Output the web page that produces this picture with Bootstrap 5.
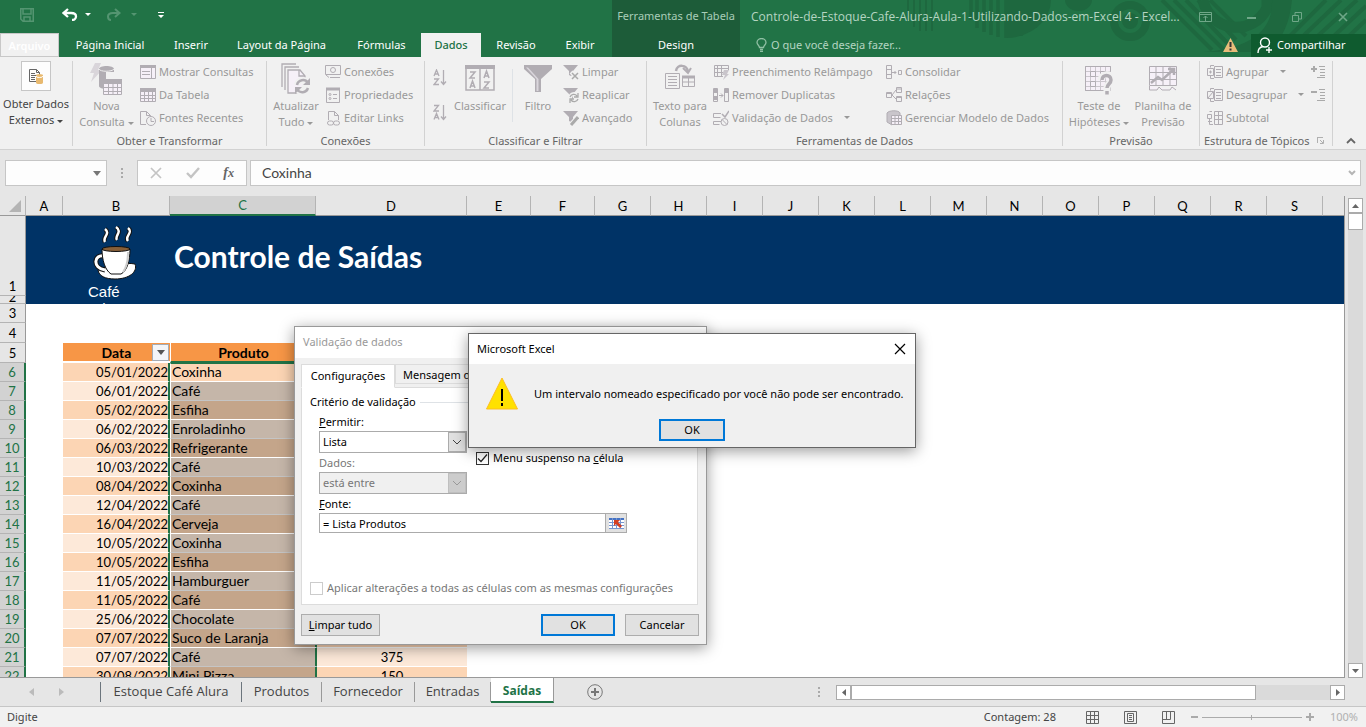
<!DOCTYPE html>
<html lang="pt-BR">
<head>
<meta charset="utf-8">
<meta name="viewport" content="width=device-width, initial-scale=1">
<title>Controle-de-Estoque-Cafe-Alura-Aula-1 - Excel</title>
<link href="https://cdn.jsdelivr.net/npm/bootstrap@5.3.0/dist/css/bootstrap.min.css" rel="stylesheet">
<style>
:root{--xl:#217346;--xl-dark:#1d5c39;--ui:#f1f1f1;--chrome:#e6e6e6;--dis:#999;--ico:#b1adb3}
body{font-family:"Noto Sans","Open Sans",sans-serif;font-size:11px;line-height:16px;color:#444;background:var(--chrome)}
button,input,select{font:inherit;color:inherit}
button{border:0;background:none;padding:0}
svg{display:block;flex:none}
.app{min-height:100vh;height:100vh}
/* title bar and tabs */
.top{background:var(--xl);height:57px}
.top .deco{left:900px;top:0}
.mainpart{width:612px}
.ctx{width:128px;background:var(--xl-dark);color:#a9cdb8}
.bar1{height:33px}
.tabs{display:grid;grid-template-columns:59px 102px 60px 121px 79px 60px 70px 58px;height:24px}
.tabs a,.ctx a{color:#fff;text-decoration:none;text-align:center;line-height:24px;height:24px;white-space:nowrap}
.tabs a.filetab{background:var(--ui);border:1px solid #c8c8c8;line-height:24px;font-weight:600}
.tabs a.on{background:var(--ui);color:var(--xl);font-weight:500}
.doc{color:#b5d5c2}
.doctitle{font-family:"Open Sans",sans-serif;font-size:12px;padding-left:11px}
.winbtns button{width:46px;height:24px;display:flex;align-items:center;justify-content:center}
.share{background:#0f5b2f;color:#fff;width:115px;height:23px}
/* ribbon */
.ribbon{background:var(--ui);height:93px;border-bottom:1px solid #d2d2d2;padding-top:3px}
.rgroup{position:relative;border-right:1px solid #d2d2d2;height:85px;margin-top:1px}
.rgroup .acts{height:69px;display:flex}
.rgroup .gname{color:#666;text-align:center;line-height:16px;height:16px;padding-top:3px}
.big{display:flex;flex-direction:column;align-items:center;color:var(--dis);white-space:nowrap;padding-top:2px}
.big svg.pic{margin-bottom:3px;height:32px}
.big.live{color:#444;padding-top:0}
.rows{display:flex;flex-direction:column;margin-top:-1px}
.rows button{height:23px;display:flex;align-items:center;gap:3px;color:var(--dis);white-space:nowrap}
.car{display:inline-block;border:3px solid transparent;border-top-color:currentColor;border-bottom:0;vertical-align:middle;margin-left:3px}
.picbox{width:30px;height:30px;background:#fdfdfd;border:1px solid #c6c6c6;display:flex;align-items:center;justify-content:center;margin-bottom:5px}
/* formula bar */
.fbar{height:46px;padding:10px 5px 10px 5px}
.fbox{background:#fdfdfd;border:1px solid #c6c6c6;height:26px}
.namebox{width:102px}
.fxin{border:0;background:transparent;outline:0;font-family:Lato,sans-serif;font-size:14px;padding:0 0 0 11px}
/* sheet */
.sheet{font-family:Lato,"Noto Sans",sans-serif;font-size:14px;line-height:17px;color:#000;background:#fff;border-right:1px solid #999;border-bottom:1px solid #999;overflow:hidden}
.sheet table{table-layout:fixed;border-collapse:separate;border-spacing:0;width:100%}
.sheet th,.sheet td{padding:0;overflow:hidden;white-space:nowrap;font-weight:400}
.sheet th{font-size:13px}
.sheet thead th{height:20px;background:var(--chrome);border-right:1px solid #b4b4b4;border-bottom:1px solid #999;text-align:center;padding-top:1px}
.sheet thead th.sel{background:#d2d2d2;color:var(--xl);border-bottom:2px solid var(--xl)}
.sheet tbody th{background:var(--chrome);border-right:1px solid #999;border-bottom:1px solid #b4b4b4;text-align:center;vertical-align:bottom;height:19px}
.sheet tbody th.tall{height:80px}
.sheet tbody th.tiny{height:8px;line-height:7px}
.sheet tbody th.mid{height:20px}
.tiny div{height:7px;overflow:hidden;display:flex;align-items:end;line-height:12px;justify-content:center}
.picked th{background:#d2d2d2!important;color:var(--xl);border-right:2px solid var(--xl)!important}
.banner{background:#036;color:#fff;height:88px;overflow:hidden}
.banner h1{font-size:30px;line-height:34px;font-weight:700;margin:0;padding:23px 0 0 12px}
.logo{width:74px;margin-left:62px;padding-top:10px;font:15px/17px "Liberation Sans",sans-serif}
.band td{vertical-align:top}
.band td.c1,.band td.c2,.band td.c3{border-bottom:1px solid #fff}
.band .c1{background:#fcd5b4;text-align:right}
.band .c2{background:#c4a58a;border-left:1px solid #fff;padding-left:1px!important;box-shadow:inset -1px 0 var(--xl)}
.band .c1{border-right:2px solid var(--xl);font-size:13px;line-height:18px}
.band .c3{background:#fcd5b4;text-align:center;border-left:1px solid var(--xl);font-size:13px;line-height:18px}
.band:nth-child(odd) .c1,.band:nth-child(odd) .c3{background:#fde9d9}
.band:nth-child(odd) .c2{background:#c5b6a9;border-bottom-color:#c5c5c5}
.band .c2.first{background:#fcd5b4;border-top:1px solid var(--xl);line-height:16px}
.cols td.hd{background:#f79646;font-weight:700;text-align:center;border-bottom:2px solid #fff;vertical-align:bottom}
.cols td.sela{border-left:1px solid #fff;border-bottom-color:var(--xl)}
.filt{right:1px;bottom:0;width:17px;height:17px;background:#f3f5f8;border:1px solid #a5acb5;display:flex;align-items:center;justify-content:center}
.vbar{width:15px;margin:2px 3px 0 3px;background:#dadada}
.vbar button{width:15px;height:15px;background:#fff;border:1px solid #ababab;display:flex;align-items:center;justify-content:center}
.vbar .thumb{height:17px}
/* bottom bars */
.sheets{height:28px;color:#444;font-family:"Open Sans",sans-serif;font-size:13px}
.sheets a{color:#444;text-decoration:none;height:20px;line-height:18px;text-align:center;border-right:1px solid #999;margin-top:4px;white-space:nowrap}
.sheets a.on{height:25px;margin-top:0;background:#fff;color:var(--xl);font-size:12px;font-weight:700;line-height:26px;border-bottom:2px solid var(--xl)}
.hbar{background:#dadada;height:15px;width:509px}
.hbar button{background:#fff;border:1px solid #ababab;width:15px;height:15px;display:flex;align-items:center;justify-content:center}
.hbar .thumb{width:405px}
.status{height:21px;background:var(--ui);border-top:1px solid #c6c6c6}
.zoomer{-webkit-appearance:none;appearance:none;width:100px;height:9px;margin:0;background:linear-gradient(#ababab,#ababab) center/100% 1px no-repeat}
.zoomer::-webkit-slider-thumb{-webkit-appearance:none;width:1px;height:5px;background:#ababab}
/* dialogs */
.dlg{position:absolute;color:#000;background:#f0f0f0;box-shadow:0 3px 14px rgba(0,0,0,.4)}
.dlg label{display:block}
.valid{left:294px;top:326px;width:413px;border:1px solid #999;z-index:2}
.valid .cap{background:#fff;height:31px;line-height:30px;padding-left:8px;color:#999}
.valid .page{background:#fff;border:1px solid #dcdcdc;margin:-1px 8px 0 6px;height:218px;padding:6px 8px 0 8px}
.valid .dt{border:1px solid #dcdcdc;background:#f0f0f0;height:20px;line-height:20px;padding:0 7px}
.valid .dt.on{background:#fff;border-bottom-color:#fff;height:24px;line-height:22px;width:94px;padding:0;position:relative}
.field{border:1px solid #ababab;border-radius:0;background:#fff;padding:0 3px;outline:0}
.pick{appearance:none;-webkit-appearance:none;width:148px;height:22px;background:#fff url("data:image/svg+xml,%3Csvg xmlns='http://www.w3.org/2000/svg' width='18' height='20'%3E%3Crect x='.5' y='.5' width='17' height='19' fill='%23e1e1e1' stroke='%23ababab'/%3E%3Cpath d='M5 8l4 4 4-4' fill='none' stroke='%23444'/%3E%3C/svg%3E") right center no-repeat}
.pick:disabled{background-color:#f0f0f0;color:#777;opacity:1;background-image:url("data:image/svg+xml,%3Csvg xmlns='http://www.w3.org/2000/svg' width='18' height='20'%3E%3Crect x='.5' y='.5' width='17' height='19' fill='%23ccc' stroke='%23bfbfbf'/%3E%3Cpath d='M5 8l4 4 4-4' fill='none' stroke='%23999'/%3E%3C/svg%3E")}
.tick{appearance:none;-webkit-appearance:none;width:13px;height:13px;border:1px solid #333;background:#fff;margin:0;flex:none}
.tick:checked{background:url("data:image/svg+xml,%3Csvg xmlns='http://www.w3.org/2000/svg' width='11' height='11'%3E%3Cpath d='M1 5.5l3 3 6-7' fill='none' stroke='%23222' stroke-width='1.2'/%3E%3C/svg%3E")}
.tick:disabled{border-color:#ccc}
.pb{background:#e1e1e1;border:1px solid #adadad;height:22px;width:74px;line-height:20px}
.pb.main{border:2px solid #0078d7;line-height:18px}
.alertbox{left:468px;top:333px;width:448px;border:1px solid #666;z-index:3}
.alertbox .cap{background:#fff;height:30px}
</style>
</head>
<body>
<svg width="0" height="0" class="position-absolute" aria-hidden="true">
<defs>
<symbol id="win" viewBox="0 0 16 16"><path d="M.5 1.5h15v13H.5zM11.5 4v10M2 7.5h8M2 10.500h8" fill="#f6f0f8" stroke="#b1adb3"/><path d="M0 1h16v3H0z" fill="#b1adb3"/></symbol>
<symbol id="tab" viewBox="0 0 16 16"><path d="M.5 1.500h15v13H.5z" fill="#f6f0f8" stroke="#b1adb3"/><path d="M0 1h16v4H0z" fill="#b1adb3"/><path d="M4.500 2v13M8.500 2v13M12.500 2v13M0 8.500h16M0 11.500h16" stroke="#b1adb3"/></symbol>
<symbol id="page" viewBox="0 0 16 16"><path d="M6 14.500H.5V1.500h6l4 4V7M6.500 1.500v4h4" fill="none" stroke="#b1adb3"/></symbol>
<symbol id="funnel" viewBox="0 0 16 16"><path d="M0 1h15L10 7v6l-4-2V7z" fill="#b1adb3"/></symbol>
<symbol id="box5" viewBox="0 0 16 16"><path d="M.5 1.500h5v13h-5zM.5 5.500h5M.5 10.500h5" fill="none" stroke="#b1adb3"/></symbol>
<symbol id="grp" viewBox="0 0 16 16"><path d="M7.500 2.500h8v11h-8zM9 5.500h5M9 8.500h5M9 11.500h5M7 1.500H3.500v2M3.500 12v2.500H7M.5 4.500h6v7h-6z" fill="none" stroke="#b1adb3"/></symbol>
</defs></svg>
<div class="app d-flex flex-column position-relative overflow-hidden">

<header class="top d-flex position-relative flex-shrink-0">
  <svg class="deco position-absolute" width="466" height="52" viewBox="0 0 466 52" fill="#1e683f" stroke="#1e683f">
    <path d="M7 0h2v20H7zM13 0h2v27h-2zM19 0h2v31h-2zM25 0h2v31h-2zM31 0h2v31h-2z" stroke="none"/>
    <path d="M71 0v20M77 0v28M84 0v32M91 0v35M98 0v37M106 0v38M114 0v37M121 0v36M128 0v32M135 0v28M142 0v20" stroke-width="3.500"/>
    <path d="M106 0h45a45 38 0 0 1-45 38z" stroke="none"/><path d="M165 0a13.500 11 0 0 0 27 0z" stroke="none"/>
    <circle cx="230" cy="21" r="16" fill="none" stroke-width="8"/><circle cx="230" cy="21" r="8" stroke="none"/>
    <path d="M262 0l50 50M274 0l50 50M286 0l46 48M298 0l38 40M310 0l36 36" fill="none" stroke-width="4"/>
    <path d="M303 0a34 34 0 0 0 64 8V0" fill="none" stroke-width="11"/>
    <path d="M392 0q-4 40-28 52h-60q70-6 68-52z" stroke="none"/>
    <path d="M399 40L441 0M409 44L457 0M421 48L466 6M433 51L466 20M388 38L426 0" fill="none" stroke-width="4"/>
  </svg>
  <div class="mainpart flex-shrink-0">
    <div class="bar1 d-flex align-items-center pb-1">
      <button aria-label="Salvar" style="margin-left:20px"><svg width="14" height="14" fill="none" stroke="#549571" stroke-width="1.500"><path d="M.75 .75h12.500v12.500H3L.75 11zM3 1v5h8V1M4 13V9h6v4"/></svg></button>
      <button class="ms-4" aria-label="Desfazer"><svg width="20" height="13" fill="none" stroke="#fff" stroke-width="2.300" class="ms-1"><path d="M6 1L1.500 5 6 9M2 5H9c3.500 0 5 1.500 5 3.500s-2 3.500-4 3.500"/></svg></button>
      <i class="car text-white"></i>
      <button aria-label="Refazer" style="margin-left:15px"><svg width="17" height="13" fill="none" stroke="#549571" stroke-width="2"><path d="M9 1l4.500 4L9 9M13 5H7C3.500 5 2 6.500 2 8.500S3 12 5 12"/></svg></button>
      <i class="car ms-2" style="color:#549571"></i>
      <button aria-label="Personalizar" style="margin-left:21px"><svg width="6" height="8" fill="#fff"><path d="M0 1h6v1H0zM0 4h6L3 7z"/></svg></button>
    </div>
    <nav class="tabs">
      <a href="#" class="filetab">Arquivo</a><a href="#">Página Inicial</a><a href="#">Inserir</a><a href="#">Layout da Página</a><a href="#">Fórmulas</a><a href="#" class="on">Dados</a><a href="#">Revisão</a><a href="#">Exibir</a>
    </nav>
  </div>
  <div class="ctx d-flex flex-column flex-shrink-0 text-center text-nowrap">
    <div class="bar1 pt-2">Ferramentas de Tabela</div>
    <a href="#">Design</a>
  </div>
  <div class="flex-grow-1 position-relative">
    <div class="bar1 d-flex align-items-center doc">
      <span class="doctitle text-nowrap me-auto">Controle-de-Estoque-Cafe-Alura-Aula-1-Utilizando-Dados-em-Excel 4 - Excel...</span>
      <div class="winbtns d-flex align-items-center">
      <button aria-label="Opções da faixa"><svg width="13" height="10" fill="none" stroke="#6fa788"><path d="M.5 .5h12v9H.5zM1 2.500h11M6.500 9V4M4.500 6l2-2 2 2"/></svg></button>
      <button aria-label="Minimizar"><svg width="9" height="10"><path d="M0 6h9" stroke="#6fa788" stroke-width="2"/></svg></button>
      <button aria-label="Restaurar"><svg width="10" height="10" fill="none" stroke="#6fa788"><path d="M.5 3.500h6v6h-6zM3 3V.5h6.500V7H7"/></svg></button>
      <button aria-label="Fechar"><svg width="10" height="10"><path d="M1 1l8 8M9 1L1 9" stroke="#6fa788" stroke-width="1.600"/></svg></button>
      </div>
    </div>
    <div class="d-flex align-items-center doc" style="height:24px">
      <svg width="11" height="14" class="ms-3" fill="none" stroke="#8fbfa3" stroke-width="1.300"><path d="M3.500 9.500c0-2-2.500-2.500-2.500-5a4.500 4 0 0 1 9 0c0 2.500-2.500 3-2.500 5zM4 11.500h3M4 13.300h3"/></svg>
      <button class="doc ms-1">O que você deseja fazer...</button>
      <svg width="15" height="14" class="ms-auto" style="margin-right:13px"><path d="M7.500 0L15 14H0z" fill="#e9bd7b"/><path d="M7.500 4v5M7.500 10.500v2" stroke="#333" stroke-width="2"/></svg>
      <button class="share d-flex align-items-center"><svg width="16" height="17" class="me-1" style="margin-left:6px" fill="none" stroke="#fff" stroke-width="1.400"><circle cx="8" cy="5.500" r="4.500"/><path d="M1 16c0-4 2-6 5-6.500M12 10v6M9 13h6"/></svg>Compartilhar</button>
    </div>
  </div>
</header>

<section class="ribbon d-flex flex-shrink-0">
  <div class="rgroup" style="width:73px">
    <div class="acts justify-content-center"><button class="big live"><span class="picbox"><svg width="16" height="17"><path d="M1.500 1.500h7l3 3v9h-10zM8.500 1.500v3h3M3 5.500h4M3 7.500h6M3 9.500h4M3 11.500h4" fill="none" stroke="#666"/><path d="M8 7.500v7a3.500 1.500 0 0 0 7 0v-7a3.500 1.500 0 0 0-7 0" fill="#e8b96f"/><path d="M8 8a3.500 1.500 0 0 0 7 0" stroke="#fff" fill="none"/></svg></span><span>Obter Dados</span><span>Externos<i class="car"></i></span></button></div>
  </div>
  <div class="rgroup" style="width:194px">
    <div class="acts"><button class="big justify-content-start" style="width:67px">
      <svg class="pic" width="33" height="32"><path d="M5 0h6L8 7h4L1 19l3-9H0z" fill="#d9d5da"/><path d="M9 6v17c0 2 4 3 7 3V9h8V6c0-4-15-4-15 0" fill="#b1adb3"/><path d="M9 6c1 3 13 3 15 0" stroke="#eee" fill="none"/><path d="M13.500 17.500h18v14h-18z" fill="#f6f0f8" stroke="#b1adb3"/><path d="M13 16h19v5H13z" fill="#b1adb3"/><path d="M18.500 20v12M23 20v12M27.500 20v12M13 24.500h19M13 28.500h19" stroke="#b1adb3"/></svg><span>Nova</span><span>Consulta<i class="car"></i></span></button>
      <div class="rows"><button><svg width="16" height="16"><use href="#win"/></svg>Mostrar Consultas</button><button><svg width="16" height="16"><use href="#tab"/></svg>Da Tabela</button><button><svg width="16" height="16" fill="none" stroke="#b1adb3"><use href="#page"/><circle cx="11" cy="11" r="4.500" fill="#f1f1f1"/><path d="M11 8v3.500h3"/></svg>Fontes Recentes</button></div></div>
    <div class="gname">Obter e Transformar</div>
  </div>
  <div class="rgroup" style="width:158px">
    <div class="acts"><button class="big" style="width:58px"><svg class="pic" width="32" height="32" fill="none" stroke="#b1adb3" stroke-width="1.300"><path d="M2 24V1h14M5 27V4h14"/><path d="M18 30H8V7h12l5 6v3" fill="#f6f0f8"/><path d="M19 7v6h6"/><path d="M17 22a6 6 0 0 1 11-2M28 25a6 6 0 0 1-11 1" stroke="#f1f1f1" stroke-width="6"/><path d="M17 22a6 6 0 0 1 11-2M28 25a6 6 0 0 1-11 1" stroke-width="2.500"/><path d="M30 15v7h-7zM15 31v-7h7z" fill="#b1adb3" stroke="none"/></svg><span>Atualizar</span><span>Tudo<i class="car"></i></span></button>
      <div class="rows"><button><svg width="16" height="16" fill="none" stroke="#b1adb3"><path d="M.5 1.500h15v9h-15zM5 13.500h10M1 11l3 2.500"/><circle cx="8" cy="6" r="2.500"/></svg>Conexões</button><button><svg width="16" height="16" fill="none" stroke="#b1adb3"><path d="M1.500 1.500h13v14h-13zM8 7.500h4M8 11.500h4"/><path d="M1 2h14" stroke-width="3"/><circle cx="5" cy="7.500" r="1"/><circle cx="5" cy="11.500" r="1"/></svg>Propriedades</button><button><svg width="16" height="16" fill="none" stroke="#b1adb3"><path d="M3.500 10V1.500h6l4 4V10M9.500 1.500v4h4"/><rect x="2.500" y="11" width="6" height="4" rx="2"/><rect x="8.500" y="11" width="6" height="4" rx="2"/></svg>Editar Links</button></div></div>
    <div class="gname">Conexões</div>
  </div>
  <div class="rgroup" style="width:222px">
    <div class="acts"><div class="rows justify-content-around" style="width:27px;padding-left:8px">
      <button aria-label="Classificar de A a Z"><svg width="14" height="17" fill="none" stroke="#b1adb3" stroke-width="1.300"><path d="M1 7l2.500-6L6 7M2 5h3M1 10h4.500L1 15.500h5M10.500 1v14M8 12.500l2.500 3 2.500-3"/></svg></button>
      <button aria-label="Classificar de Z a A"><svg width="14" height="17" fill="none" stroke="#b1adb3" stroke-width="1.300"><path d="M1 15.500l2.500-6L6 15.500M2 13.500h3M1 1.500h4.500L1 7h5M10.500 1v14M8 12.500l2.500 3 2.500-3"/></svg></button></div>
      <button class="big" style="width:56px"><svg class="pic" width="30" height="32" fill="none" stroke="#b1adb3" stroke-width="1.500"><path d="M1 4h28v23H1zM15 4v23"/><path d="M0 4h30" stroke-width="4"/><path d="M5 9h5l-5 6h5M19 15l2.500-7 2.500 7M19.500 13h4M5 25l2.500-7 2.500 7M5.500 23h4M19 19h5l-5 6h5"/></svg><span>Classificar</span></button>
      <span class="border-start my-2 ms-1"></span>
      <button class="big" style="width:50px"><svg class="pic" width="28" height="32"><path d="M0 2h28v4L17 16v13h-6V16L0 6z" fill="#b1adb3"/><path d="M12.500 16h2v12h-2zM2 4.500L12.500 16h2L4 4.500z" fill="#dad6dc"/></svg><span>Filtro</span></button>
      <div class="rows"><button><svg width="16" height="16"><use href="#funnel"/><path d="M8 8l7 7M15 8l-7 7" stroke="#f1f1f1" stroke-width="4"/><path d="M9 9l6 6M15 9l-6 6" stroke="#aaa" stroke-width="1.500"/></svg>Limpar</button><button><svg width="16" height="16" fill="none"><use href="#funnel"/><circle cx="11" cy="11" r="4" stroke="#f1f1f1" stroke-width="4"/><path d="M7 10a4 4 0 0 1 7-1M15 12a4 4 0 0 1-7 1M15 6v4h-4M7 16v-4h4" stroke="#aaa" stroke-width="1.300"/></svg>Reaplicar</button><button><svg width="16" height="16"><use href="#funnel"/><path d="M8 15l7-8" stroke="#f1f1f1" stroke-width="5"/><path d="M8 15l7-8" stroke="#aaa" stroke-width="3"/></svg>Avançado</button></div></div>
    <div class="gname">Classificar e Filtrar</div>
  </div>
  <div class="rgroup" style="width:416px">
    <div class="acts"><button class="big" style="width:66px"><svg class="pic" width="32" height="32" fill="none" stroke="#b1adb3"><path d="M1.500 10.500h14v15h-14zM4 13.500h9M4 16.500h9M4 19.500h9M4 22.500h9M18.500 14.500h12v9h-12zM19 19h12M24.500 15v9"/><path d="M18 14h13" stroke-width="3"/><path d="M12 8c1-7 11-7 12 1" stroke-width="2.500"/><path d="M19 5l5 5 3-5" stroke-width="2"/></svg><span>Texto para</span><span>Colunas</span></button>
      <div class="rows" style="width:173px"><button><svg width="16" height="16" fill="none" stroke="#b1adb3"><path d="M10 12.500H1.500v-11h14V6M1 4.500h14M1 8.500h9M4.500 2v10M8.500 2v10"/><path d="M11 6h5l-2 4h2l-6 6 2-5H9z" fill="#c9c5cb" stroke="none"/></svg>Preenchimento Relâmpago</button><button><svg width="16" height="16" fill="none" stroke="#b1adb3"><path d="M.5 1.500h4v13h-4zM11.500 1.500h4v13h-4zM6 8.500h4M8 6.500l2 2-2 2"/><path d="M0 4h5M0 11h5M11 4h5" stroke-width="4"/></svg>Remover Duplicatas</button><button><svg width="16" height="16" fill="none" stroke="#b1adb3"><path d="M8 3.500H.5v4h7M8 11.500H.5v3h6"/><path d="M9 4l3 3 4-6" stroke-width="1.500"/><circle cx="11.500" cy="12" r="3.500"/><path d="M9 9.500l5 5"/></svg>Validação de Dados<i class="car ms-2"></i></button></div>
      <div class="rows"><button><svg width="16" height="16" fill="none" stroke="#b1adb3"><use href="#box5"/><path d="M6 8.500h4M8.500 7l1.500 1.500L8.500 10M12.500 6.500h3v4h-3z"/></svg>Consolidar</button><button><svg width="16" height="16" fill="none" stroke="#b1adb3"><path d="M.5 5.500h5v5h-5zM10.500 .5h5v5h-5zM10.500 9.500h5v5h-5zM6 8l4-5M6 8l4 4M0 6.500h6M10 2h6M10 10.500h6"/></svg>Relações</button><button><svg width="16" height="16" fill="none" stroke="#b1adb3"><path d="M1 3c2-3 12-3 13 0v3H6v9L1 12z" fill="#c9c5cb"/><path d="M5.500 5.500h10v9h-10zM9 5v10M12.500 5v10M5 8.500h11M5 11.500h11" fill="#f6f0f8"/></svg>Gerenciar Modelo de Dados</button></div></div>
    <div class="gname">Ferramentas de Dados</div>
  </div>
  <div class="rgroup" style="width:137px">
    <div class="acts" style="padding-left:3px"><button class="big" style="width:66px"><svg class="pic" width="30" height="32" fill="none" stroke="#b1adb3"><path d="M1.500 3.500h25v24h-25z" fill="#f6f0f8"/><path d="M6.500 3v24M11.500 3v24M16.500 3v24M21.500 3v24M1 8.500h26M1 13.500h26M1 18.500h26M1 23.500h26" stroke="#cbc7cd"/><path d="M1.500 3.500h25v24h-25zM6.500 8.500h5v5h-5zM16.500 8.500h5v5h-5zM6.500 18.500h5v5h-5z"/><path d="M17 17c0-7 11-7 11-1 0 5-5 4-5 9v7" stroke="#f1f1f1" stroke-width="7"/><path d="M18 17c0-6 9-6 9 0 0 4-4 4-4 8M23 28v3.500" stroke-width="3.500"/></svg><span>Teste de</span><span>Hipóteses<i class="car"></i></span></button><button class="big" style="width:62px"><svg class="pic" width="30" height="32" fill="none" stroke="#b1adb3"><path d="M1.500 3.500h27v19h-27zM8 3v20M15 3v20M22 3v20M1 9.500h27M1 16.500h27M1.500 23v4H9l2-3 3 3h8l2-3 4 3" fill="#f6f0f8"/><path d="M3 20l7-6 4 3 12-11M20 6h6v6" stroke-width="2.500"/></svg><span>Planilha de</span><span>Previsão</span></button></div>
    <div class="gname">Previsão</div>
  </div>
  <div class="rgroup" style="width:133px">
    <div class="acts"><div class="rows" style="width:103px;padding-left:7px"><button><svg width="16" height="16" stroke="#b1adb3"><use href="#grp"/><path d="M2 8h3M3.500 6.500v3"/></svg>Agrupar<i class="car ms-2"></i></button><button><svg width="16" height="16" stroke="#b1adb3"><use href="#grp"/><path d="M1 11l5-6"/></svg>Desagrupar<i class="car ms-2"></i></button><button><svg width="16" height="16" fill="none" stroke="#b1adb3"><path d="M7.500 1.500h8v13h-8zM11.500 1v14M7 5.500h9M7 9.500h9M5 1.500H2.500M.5 4.500h4v4h-4zM2.500 9v5.500H6M1 11.500h4"/></svg>Subtotal</button></div>
      <div class="rows ms-1 ps-1"><button aria-label="Mostrar Detalhe"><svg width="14" height="14" stroke="#aaa"><path d="M0 4h6M3 1v6" stroke-width="2"/><path d="M8 1.500h6M9 4.500h5M9 7.500h5M9 10.500h5M6 12.500h8"/></svg></button><button aria-label="Ocultar Detalhe"><svg width="14" height="14" stroke="#aaa"><path d="M0 4h6" stroke-width="2"/><path d="M8 1.500h6M9 4.500h5M9 7.500h5M9 10.500h5M6 12.500h8"/></svg></button></div></div>
    <div class="gname d-flex justify-content-between ps-1 pe-1 text-nowrap"><span>Estrutura de Tópicos</span><svg width="7" height="7" class="me-1 mt-1" fill="none" stroke="#b0b0b0"><path d="M0 .5h6M.5 0v6M3 3l3 3M6.500 3v3.500H3"/></svg></div>
  </div>
  <button class="ms-auto align-self-end mb-1" aria-label="Recolher" style="width:14px;margin-right:6px"><svg width="10" height="8" fill="none" stroke="#666" stroke-width="1.800"><path d="M1 6l4-4 4 4"/></svg></button>
</section>

<section class="fbar d-flex flex-shrink-0">
  <button class="fbox namebox d-flex align-items-center justify-content-end" aria-label="Caixa de nome" style="padding-right:5px"><svg width="8" height="5"><path d="M0 0h8L4 5z" fill="#777"/></svg></button>
  <span class="d-flex align-items-center justify-content-center" style="width:30px"><svg width="2" height="11" fill="#aaa"><path d="M0 0h2v2H0zM0 4h2v2H0zM0 8h2v2H0z"/></svg></span>
  <div class="fbox d-flex align-items-center justify-content-around" style="width:110px">
    <button aria-label="Cancelar"><svg width="12" height="12"><path d="M1 1l10 10M11 1L1 11" stroke="#c4c4c4" stroke-width="1.700"/></svg></button>
    <button aria-label="Inserir"><svg width="14" height="12" fill="none"><path d="M1 6l4 4 8-9" stroke="#c4c4c4" stroke-width="2.400"/></svg></button>
    <button aria-label="Inserir função" style="font:italic 700 14px/16px 'Liberation Serif',serif;color:#666">f<small>x</small></button>
  </div>
  <div class="fbox flex-grow-1 d-flex align-items-center" style="margin-left:3px"><input class="fxin flex-grow-1" value="Coxinha" aria-label="Barra de fórmulas"><svg width="8" height="6" class="me-1" fill="none" stroke="#b5b5b5" stroke-width="2"><path d="M1 1l3 3 3-3"/></svg></div>
</section>

<div class="d-flex flex-grow-1 overflow-hidden" style="min-height:0">
<div class="sheet flex-grow-1">
<table>
<colgroup><col style="width:26px"><col style="width:37px"><col style="width:107px"><col style="width:146px"><col style="width:151px"><col style="width:64px"><col style="width:64px"><col span="13" style="width:56px"><col></colgroup>
<thead><tr><th><svg width="12" height="12" class="ms-auto me-1"><path d="M12 0v12H0z" fill="#b4b4b4"/></svg></th><th>A</th><th>B</th><th class="sel">C</th><th>D</th><th>E</th><th>F</th><th>G</th><th>H</th><th>I</th><th>J</th><th>K</th><th>L</th><th>M</th><th>N</th><th>O</th><th>P</th><th>Q</th><th>R</th><th>S</th><th class="border-end-0"></th></tr></thead>
<tbody>
<tr><th class="tall">1</th><td colspan="20" rowspan="2"><div class="banner d-flex"><div class="logo"><svg width="46" height="57" class="ms-1"><g fill="none" stroke="#111" stroke-width="4.500"><path d="M13 3c6 5-3 8 0 13M24 1c7 5-2 9 1 13M36 2c6 5-4 8 0 13"/></g><g fill="none" stroke="#fff" stroke-width="2.500"><path d="M13 3c6 5-3 8 0 13M24 1c7 5-2 9 1 13M36 2c6 5-4 8 0 13"/></g><path d="M6 44c8-4 28-8 37-6 3 8-6 15-20 15-10 0-16-3-17-9z" fill="#fff" stroke="#111"/><path d="M12 30c-10-2-12 12 1 14" fill="none" stroke="#111" stroke-width="5"/><path d="M12 30c-10-2-12 12 1 14" fill="none" stroke="#fff" stroke-width="3"/><path d="M10 23h28c0 12-3 22-9 25H19c-6-4-9-14-9-25z" fill="#fff" stroke="#111"/><path d="M31 46c4-5 5-12 5-20" stroke="#ccc" stroke-width="2" fill="none"/><ellipse cx="24" cy="23" rx="14" ry="2.500" fill="#875f38" stroke="#111"/></svg><div>Café<br>&nbsp;Alura</div></div><h1>Controle de Saídas</h1></div></td></tr>
<tr><th class="tiny"><div>2</div></th></tr>
<tr><th>3</th><td colspan="20"></td></tr>
<tr><th class="mid">4</th><td colspan="20"></td></tr>
<tr class="cols"><th class="mid">5</th><td></td><td class="hd"><div class="position-relative">Data<button class="filt position-absolute" aria-label="Filtrar"><svg width="8" height="5"><path d="M0 0h8L4 5z" fill="#555"/></svg></button></div></td><td class="hd sela">Produto</td><td class="hd"></td><td colspan="16"></td></tr>
<tr class="picked band"><th>6</th><td></td><td class="c1">05/01/2022</td><td class="c2 first">Coxinha</td><td class="c3"></td><td colspan="16"></td></tr>
<tr class="picked band"><th>7</th><td></td><td class="c1">06/01/2022</td><td class="c2">Café</td><td class="c3"></td><td colspan="16"></td></tr>
<tr class="picked band"><th>8</th><td></td><td class="c1">05/02/2022</td><td class="c2">Esfiha</td><td class="c3"></td><td colspan="16"></td></tr>
<tr class="picked band"><th>9</th><td></td><td class="c1">06/02/2022</td><td class="c2">Enroladinho</td><td class="c3"></td><td colspan="16"></td></tr>
<tr class="picked band"><th>10</th><td></td><td class="c1">06/03/2022</td><td class="c2">Refrigerante</td><td class="c3"></td><td colspan="16"></td></tr>
<tr class="picked band"><th>11</th><td></td><td class="c1">10/03/2022</td><td class="c2">Café</td><td class="c3"></td><td colspan="16"></td></tr>
<tr class="picked band"><th>12</th><td></td><td class="c1">08/04/2022</td><td class="c2">Coxinha</td><td class="c3"></td><td colspan="16"></td></tr>
<tr class="picked band"><th>13</th><td></td><td class="c1">12/04/2022</td><td class="c2">Café</td><td class="c3"></td><td colspan="16"></td></tr>
<tr class="picked band"><th>14</th><td></td><td class="c1">16/04/2022</td><td class="c2">Cerveja</td><td class="c3"></td><td colspan="16"></td></tr>
<tr class="picked band"><th>15</th><td></td><td class="c1">10/05/2022</td><td class="c2">Coxinha</td><td class="c3"></td><td colspan="16"></td></tr>
<tr class="picked band"><th>16</th><td></td><td class="c1">10/05/2022</td><td class="c2">Esfiha</td><td class="c3"></td><td colspan="16"></td></tr>
<tr class="picked band"><th>17</th><td></td><td class="c1">11/05/2022</td><td class="c2">Hamburguer</td><td class="c3"></td><td colspan="16"></td></tr>
<tr class="picked band"><th>18</th><td></td><td class="c1">11/05/2022</td><td class="c2">Café</td><td class="c3"></td><td colspan="16"></td></tr>
<tr class="picked band"><th>19</th><td></td><td class="c1">25/06/2022</td><td class="c2">Chocolate</td><td class="c3"></td><td colspan="16"></td></tr>
<tr class="picked band"><th>20</th><td></td><td class="c1">07/07/2022</td><td class="c2">Suco de Laranja</td><td class="c3"></td><td colspan="16"></td></tr>
<tr class="picked band"><th>21</th><td></td><td class="c1">07/07/2022</td><td class="c2">Café</td><td class="c3">375</td><td colspan="16"></td></tr>
<tr class="picked band"><th>22</th><td></td><td class="c1">30/08/2022</td><td class="c2">Mini Pizza</td><td class="c3">150</td><td colspan="16"></td></tr>
</tbody></table>
</div>
<div class="vbar d-flex flex-column flex-shrink-0"><button aria-label="Subir"><svg width="7" height="4"><path d="M0 4l3.500-4L7 4z" fill="#666"/></svg></button><button class="thumb" aria-label="Rolagem vertical"></button><button class="mt-auto" aria-label="Descer"><svg width="7" height="4"><path d="M0 0l3.500 4L7 0z" fill="#666"/></svg></button></div>
</div>

<nav class="sheets d-flex flex-shrink-0">
  <div class="d-flex justify-content-around align-items-center ps-3 pe-4" style="width:100px"><svg width="5" height="8"><path d="M5 0v8L0 4z" fill="#bbb"/></svg><svg width="5" height="8"><path d="M0 0v8l5-4z" fill="#bbb"/></svg></div>
  <a href="#" class="border-start border-secondary" style="width:142px">Estoque Café Alura</a><a href="#" style="width:80px">Produtos</a><a href="#" style="width:93px">Fornecedor</a><a href="#" style="width:76px">Entradas</a><a href="#" class="on" style="width:63px">Saídas</a>
  <button class="ms-4" style="padding-left:9px" aria-label="Nova planilha"><svg width="16" height="16" fill="none" stroke="#777"><circle cx="8" cy="8" r="7.300"/><path d="M8 4v8M4 8h8" stroke-width="2"/></svg></button>
  <div class="ms-auto d-flex align-items-center" style="padding-right:21px"><svg width="2" height="11" fill="#aaa" class="me-3"><path d="M0 0h2v2H0zM0 4h2v2H0zM0 8h2v2H0z"/></svg>
  <div class="hbar d-flex"><button aria-label="Esquerda"><svg width="4" height="7"><path d="M4 0v7L0 3.500z" fill="#666"/></svg></button><button class="thumb" aria-label="Rolagem horizontal"></button><button class="ms-auto" aria-label="Direita"><svg width="4" height="7"><path d="M0 0v7l4-3.500z" fill="#666"/></svg></button></div></div>
</nav>
<footer class="status d-flex align-items-center flex-shrink-0">
  <span style="padding-left:7px">Digite</span>
  <span class="ms-auto">Contagem: 28</span>
  <div class="d-flex" style="gap:25px;margin-left:30px"><svg width="13" height="13" fill="none" stroke="#666"><path d="M.5 .5h12v12H.5zM4.500 0v13M8.500 0v13M0 4.500h13M0 8.500h13"/></svg><svg width="13" height="13" fill="none" stroke="#666"><path d="M.5 .5h12v12H.5zM3.500 2.500h6v8h-6zM5 4.500h3M5 6.500h3M5 8.500h3"/></svg><svg width="13" height="13" fill="none" stroke="#666"><path d="M.5 .5h12v12H.5zM0 8.500h8.500V0M4.500 0v8"/></svg></div>
  <button class="ms-3" aria-label="Menos zoom"><svg width="7" height="8"><path d="M0 4h7" stroke="#aaa" stroke-width="2"/></svg></button>
  <input type="range" class="zoomer mx-1" min="0" max="100" value="50" aria-label="Zoom">
  <button aria-label="Mais zoom"><svg width="8" height="8"><path d="M0 4h8M4 0v8" stroke="#aaa" stroke-width="2"/></svg></button>
  <span class="ms-3 pe-2" style="color:#b0b0b0">100%</span>
</footer>

<div class="dlg valid" role="dialog" aria-label="Validação de dados">
  <div class="cap">Validação de dados</div>
  <div class="d-flex align-items-end" style="padding:6px 6px 0"><button class="dt on">Configurações</button><button class="dt mb-1">Mensagem de entrada</button></div>
  <div class="page">
    <div class="d-flex align-items-center gap-1"><span>Critério de validação</span><span class="flex-grow-1 border-top"></span></div>
    <div class="d-flex" style="padding:4px 0 0 9px">
      <div>
        <label for="perm"><u>P</u>ermitir:</label>
        <select id="perm" class="field pick d-block" style="margin-top:1px"><option>Lista</option></select>
        <label for="dad" style="color:#777;margin-top:2px">Dados:</label>
        <select id="dad" class="field pick d-block" disabled style="margin-top:1px"><option>está entre</option></select>
      </div>
      <div class="d-flex align-items-center align-self-start" style="padding:36px 0 0 9px;gap:4px"><input class="tick" type="checkbox" id="menu" checked><label for="menu">Menu suspenso na <u>c</u>élula</label></div>
    </div>
    <div style="padding:2px 0 0 9px"><label for="fonte"><u>F</u>onte:</label>
      <div class="d-flex" style="width:308px;margin-top:1px"><input id="fonte" class="field flex-grow-1" style="height:20px" value="= Lista Produtos"><button class="field" aria-label="Selecionar intervalo" style="background:#e1e1e1;width:22px;margin-left:-1px"><svg width="15" height="13"><path d="M0 1h15v11H0z" fill="#fff"/><path d="M0 1h15v2H0z" fill="#4472c4"/><path d="M0 5.500h15M0 8.500h15M0 11.500h15M3.500 1v11M7.500 1v11M11.500 1v11" stroke="#7695cf"/><path d="M5 3h6L9 5l4 4-2 2-4-4-2 2z" fill="#d33f22"/></svg></button></div></div>
    <div class="d-flex align-items-center" style="margin-top:47px;gap:4px;color:#777"><input class="tick" type="checkbox" id="apl" disabled><label for="apl">Aplicar alterações a todas as células com as mesmas configurações</label></div>
  </div>
  <div class="d-flex" style="padding:9px 7px 8px 6px"><button class="pb" style="width:79px"><u>L</u>impar tudo</button><button class="pb main ms-auto">OK</button><button class="pb" style="margin-left:10px">Cancelar</button></div>
</div>

<div class="dlg alertbox" role="alertdialog" aria-label="Microsoft Excel">
  <div class="cap d-flex align-items-center justify-content-between ps-2 pe-2"><span>Microsoft Excel</span><button aria-label="Fechar"><svg width="13" height="12"><path d="M1 1l10 10M11 1L1 11" stroke="#000" stroke-width="1.200"/></svg></button></div>
  <div class="d-flex align-items-center text-nowrap" style="padding:13px 12px 0 17px;gap:16px"><svg width="32" height="33"><path d="M16 1L31.500 32H.5z" fill="#ffe100" stroke="#fdbd20"/><path d="M16 12v12M16 26v3" stroke="#000" stroke-width="2"/></svg><span>Um intervalo nomeado especificado por você não pode ser encontrado.</span></div>
  <div class="text-center" style="padding:9px 0 6px"><button class="pb main" style="width:66px">OK</button></div>
</div>
</div>
<script src="https://cdn.jsdelivr.net/npm/bootstrap@5.3.0/dist/js/bootstrap.bundle.min.js"></script>
</body>
</html>
